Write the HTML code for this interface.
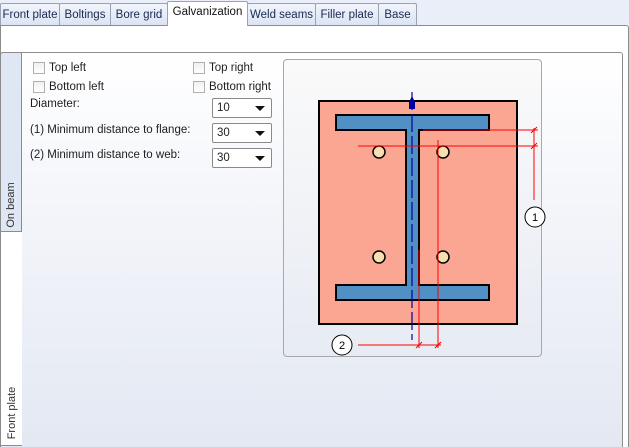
<!DOCTYPE html>
<html><head><style>
body{margin:0;width:629px;height:446px;overflow:hidden;background:#e9eef8;font-family:"Liberation Sans",sans-serif;font-size:11.5px;color:#1e1e1e;position:relative}
.tab{position:absolute;top:3px;height:22px;border:1px solid #9aa3b3;border-bottom:none;background:linear-gradient(#f1f4fb,#dce4f4);line-height:22px;text-align:center;color:#1a2a50;box-sizing:border-box;border-radius:2px 2px 0 0}
.tab.sel{top:1px;height:25px;line-height:20px;background:#fff;z-index:3;color:#111}
.page{position:absolute;left:0;top:25px;width:627px;height:421px;background:#fff;border:1px solid #8c8c8c;border-bottom:none;border-radius:0 3px 0 0}
.inner{position:absolute;left:0;top:52px;width:621px;height:394px;border:1px solid #8c8c8c;border-bottom:none;border-radius:3px 3px 0 0;background:linear-gradient(#fff 0%,#f3f5fa 40%,#e3e8f2 100%)}
.vt{position:absolute;left:0;width:22px;box-sizing:border-box;border:1px solid #8c8c8c}
.vt span{position:absolute;left:50%;white-space:nowrap;font-size:11px;color:#333}
.cb{position:absolute;width:12px;height:12px;border:1px solid #b0b0b0;background:linear-gradient(#f0f0f0,#fff);box-sizing:border-box}
.lb{position:absolute;white-space:nowrap}
.sel2{position:absolute;left:212px;width:60px;height:20px;border:1px solid #8a8a8a;border-radius:2px;background:#fff;box-sizing:border-box;line-height:19px;padding-left:4px}
.sel2:after{content:"";position:absolute;right:6px;top:7px;border-left:5px solid transparent;border-right:5px solid transparent;border-top:5px solid #111}
</style></head><body>
<div class="page"></div>
<div class="tab" style="left:0;width:60px">Front plate</div>
<div class="tab" style="left:59px;width:52px">Boltings</div>
<div class="tab" style="left:110px;width:58px">Bore grid</div>
<div class="tab sel" style="left:167px;width:81px">Galvanization</div>
<div class="tab" style="left:247px;width:69px">Weld seams</div>
<div class="tab" style="left:315px;width:64px">Filler plate</div>
<div class="tab" style="left:378px;width:39px">Base</div>
<div class="inner"></div>
<div class="vt" style="top:52px;height:180px;background:#dfe6f4;border-radius:3px 0 0 0"><span style="bottom:20px;transform:translate(-50%,0) rotate(-90deg);transform-origin:50% 50%">On beam</span></div>
<div class="vt" style="top:231px;height:215px;background:#fff;border-right:none"><span style="bottom:26px;transform:translate(-50%,0) rotate(-90deg)">Front plate</span></div>
<div class="cb" style="left:33px;top:62px"></div><div class="lb" style="left:49px;top:62px">Top left</div>
<div class="cb" style="left:193px;top:62px"></div><div class="lb" style="left:209px;top:62px">Top right</div>
<div class="cb" style="left:33px;top:81px"></div><div class="lb" style="left:49px;top:81px">Bottom left</div>
<div class="cb" style="left:193px;top:81px"></div><div class="lb" style="left:209px;top:81px">Bottom right</div>
<div class="lb" style="left:30px;top:98px">Diameter:</div>
<div class="lb" style="left:30px;top:124px">(1) Minimum distance to flange:</div>
<div class="lb" style="left:30px;top:149px">(2) Minimum distance to web:</div>
<div class="sel2" style="top:98px">10</div>
<div class="sel2" style="top:123px">30</div>
<div class="sel2" style="top:148px">30</div>
<div style="position:absolute;left:283px;top:59px;width:259px;height:298px;border:1px solid #a8a8a8;border-radius:4px;background:linear-gradient(#fafafa,#e7ebf3);box-sizing:border-box"></div>
<svg style="position:absolute;left:0;top:0" width="629" height="446">
<rect x="319" y="101" width="198" height="223" fill="#fba692" stroke="#000" stroke-width="2"/>
<path d="M336 115H489V130H419V285H489V300H336V285H406V130H336Z" fill="#5090c4" stroke="#000" stroke-width="2"/>
<g fill="#f6dfb0" stroke="#000" stroke-width="1.5">
<circle cx="379" cy="152" r="6"/><circle cx="443" cy="152" r="6"/><circle cx="379" cy="257" r="6"/><circle cx="443" cy="257" r="6"/></g>
<line x1="412" y1="92" x2="412" y2="340" stroke="#0000a0" stroke-width="1.2" stroke-dasharray="18,4"/>
<path d="M412 96L409 102V109H415V102Z" fill="#0000a0"/>
<g stroke="#f00" stroke-width="1" fill="none">
<path d="M423 130H538M358 146H538M534 128V200M438 140V348M419 250V348M358 345H441"/>
<path d="M531 133L537 127M531 149L537 143M416 348L422 342M435 348L441 342"/>
</g>
<g fill="#fff" stroke="#000" stroke-width="1"><circle cx="535" cy="217" r="10"/><circle cx="342" cy="345" r="10"/></g>
<text x="535" y="221" font-size="11" text-anchor="middle" font-family="Liberation Sans">1</text>
<text x="342" y="349" font-size="11" text-anchor="middle" font-family="Liberation Sans">2</text>
</svg>
</body></html>
